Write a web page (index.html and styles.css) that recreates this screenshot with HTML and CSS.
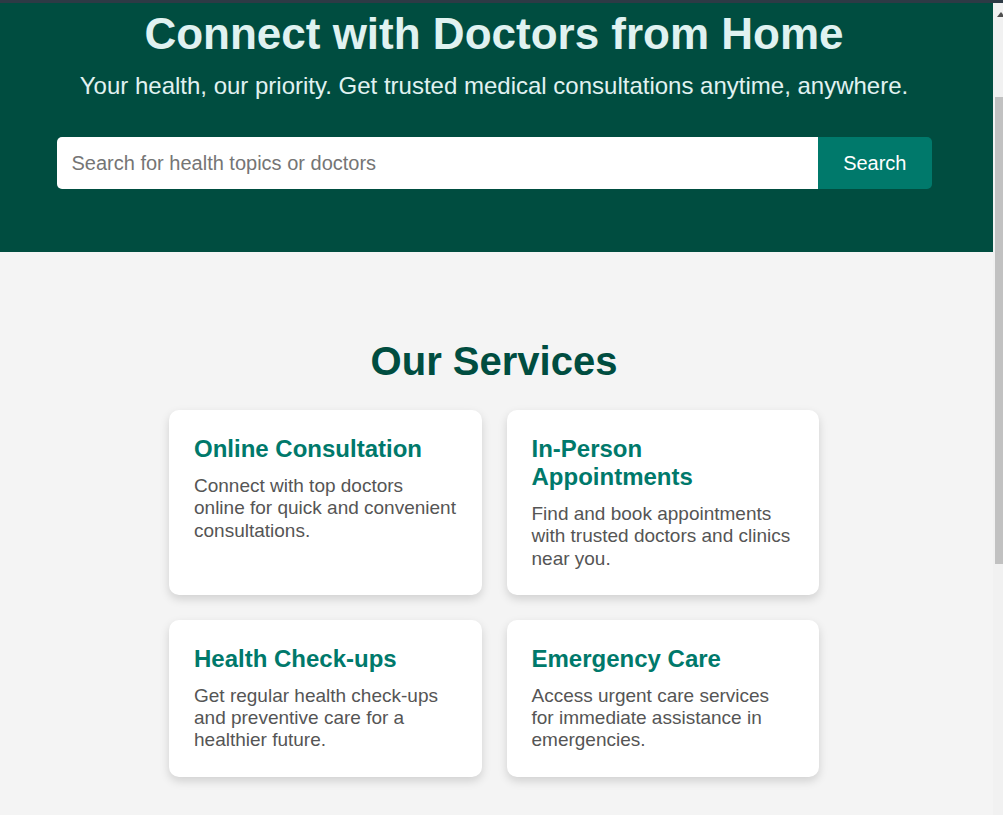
FILE: index.html
```html
<!DOCTYPE html>
<html lang="en">
<head>
<meta charset="utf-8">
<title>Connect with Doctors from Home</title>
<link rel="stylesheet" href="styles.css">
</head>
<body>
<div class="frame-bar"></div>
<div class="window">
  <div class="page" id="page">
    <header class="hero">
      <h1 class="hero-title">Connect with Doctors from Home</h1>
      <p class="hero-subtitle">Your health, our priority. Get trusted medical consultations anytime, anywhere.</p>
      <form class="search" onsubmit="return false">
        <input class="search-input" type="text" placeholder="Search for health topics or doctors">
        <button class="search-button" type="submit">Search</button>
      </form>
    </header>
    <main class="services">
      <h2 class="services-title">Our Services</h2>
      <div class="service-grid">
        <div class="service-card">
          <h3 class="card-title">Online Consultation</h3>
          <p class="card-text">Connect with top doctors online for quick and convenient consultations.</p>
        </div>
        <div class="service-card">
          <h3 class="card-title">In-Person Appointments</h3>
          <p class="card-text">Find and book appointments with trusted doctors and clinics near you.</p>
        </div>
        <div class="service-card">
          <h3 class="card-title">Health Check-ups</h3>
          <p class="card-text">Get regular health check-ups and preventive care for a healthier future.</p>
        </div>
        <div class="service-card">
          <h3 class="card-title">Emergency Care</h3>
          <p class="card-text">Access urgent care services for immediate assistance in emergencies.</p>
        </div>
      </div>
    </main>
  </div>
  <div class="rail" aria-hidden="true">
    <span class="rail-arrow"></span>
    <span class="rail-thumb"></span>
  </div>
</div>
<script src="script.js"></script>
</body>
</html>
```

FILE: styles.css
```css
* {
  box-sizing: border-box;
}

html, body {
  margin: 0;
  height: 100%;
}

body {
  display: flex;
  flex-direction: column;
  overflow: hidden;
  font-family: "Liberation Sans", Arial, sans-serif;
  background: #f4f4f4;
}

.frame-bar {
  flex: 0 0 3px;
  background: #2d3a45;
}

.window {
  flex: 1 1 auto;
  min-height: 0;
  display: flex;
}

.page {
  flex: 1 1 auto;
  min-width: 0;
  overflow-y: scroll;
  scrollbar-width: none;
  background: #f4f4f4;
}

.rail {
  flex: 0 0 10px;
  display: flex;
  flex-direction: column;
  align-items: flex-start;
  overflow: hidden;
  background: #f1f1f1;
}

.rail-arrow {
  flex: 0 0 auto;
  width: 0;
  height: 0;
  margin: 9px 0 0 4px;
  border-left: 4px solid transparent;
  border-right: 4px solid transparent;
  border-bottom: 5px solid #505050;
}

.rail-thumb {
  flex: 0 0 467px;
  width: 8px;
  margin: 80px 0 0 2px;
  background: #c1c1c1;
}

.hero {
  background: #004d40;
  color: #e0f2f1;
  text-align: center;
  padding: 140px 5px 63px 0;
}

.hero-title {
  margin: 0 0 12.5px;
  font-size: 44px;
  font-weight: bold;
}

.hero-subtitle {
  margin: 0 0 37.5px;
  font-size: 24px;
}

.search {
  display: flex;
  width: 875px;
  height: 52px;
  margin: 0 auto;
}

.search-input {
  flex: 1 1 auto;
  min-width: 0;
  border: none;
  outline: none;
  padding: 0 15px;
  font-family: inherit;
  font-size: 20px;
  color: #333;
  background: #fff;
  border-radius: 5px 0 0 5px;
}

.search-input::placeholder {
  color: #757575;
}

.search-button {
  flex: 0 0 auto;
  border: none;
  padding: 0 25px;
  font-family: inherit;
  font-size: 20px;
  color: #fff;
  background: #00796b;
  border-radius: 0 5px 5px 0;
  cursor: pointer;
}

.services {
  display: block;
  padding: 87px 5px 475px 0;
}

.services-title {
  margin: 0 0 26px;
  text-align: center;
  font-size: 40px;
  font-weight: bold;
  color: #004d40;
}

.service-grid {
  display: grid;
  grid-template-columns: 1fr 1fr;
  gap: 25px;
  width: 650px;
  margin: 0 auto;
}

.service-card {
  background: #fff;
  border-radius: 10px;
  padding: 25px;
  box-shadow: 0 4px 10px rgba(0, 0, 0, 0.15);
}

.card-title {
  margin: 0 0 12px;
  font-size: 24px;
  font-weight: bold;
  color: #00796b;
}

.card-text {
  margin: 0;
  font-size: 19px;
  line-height: 22.3px;
  color: #555;
}
```

FILE: script.js
```js
document.getElementById('page').scrollTop = 134;
```
